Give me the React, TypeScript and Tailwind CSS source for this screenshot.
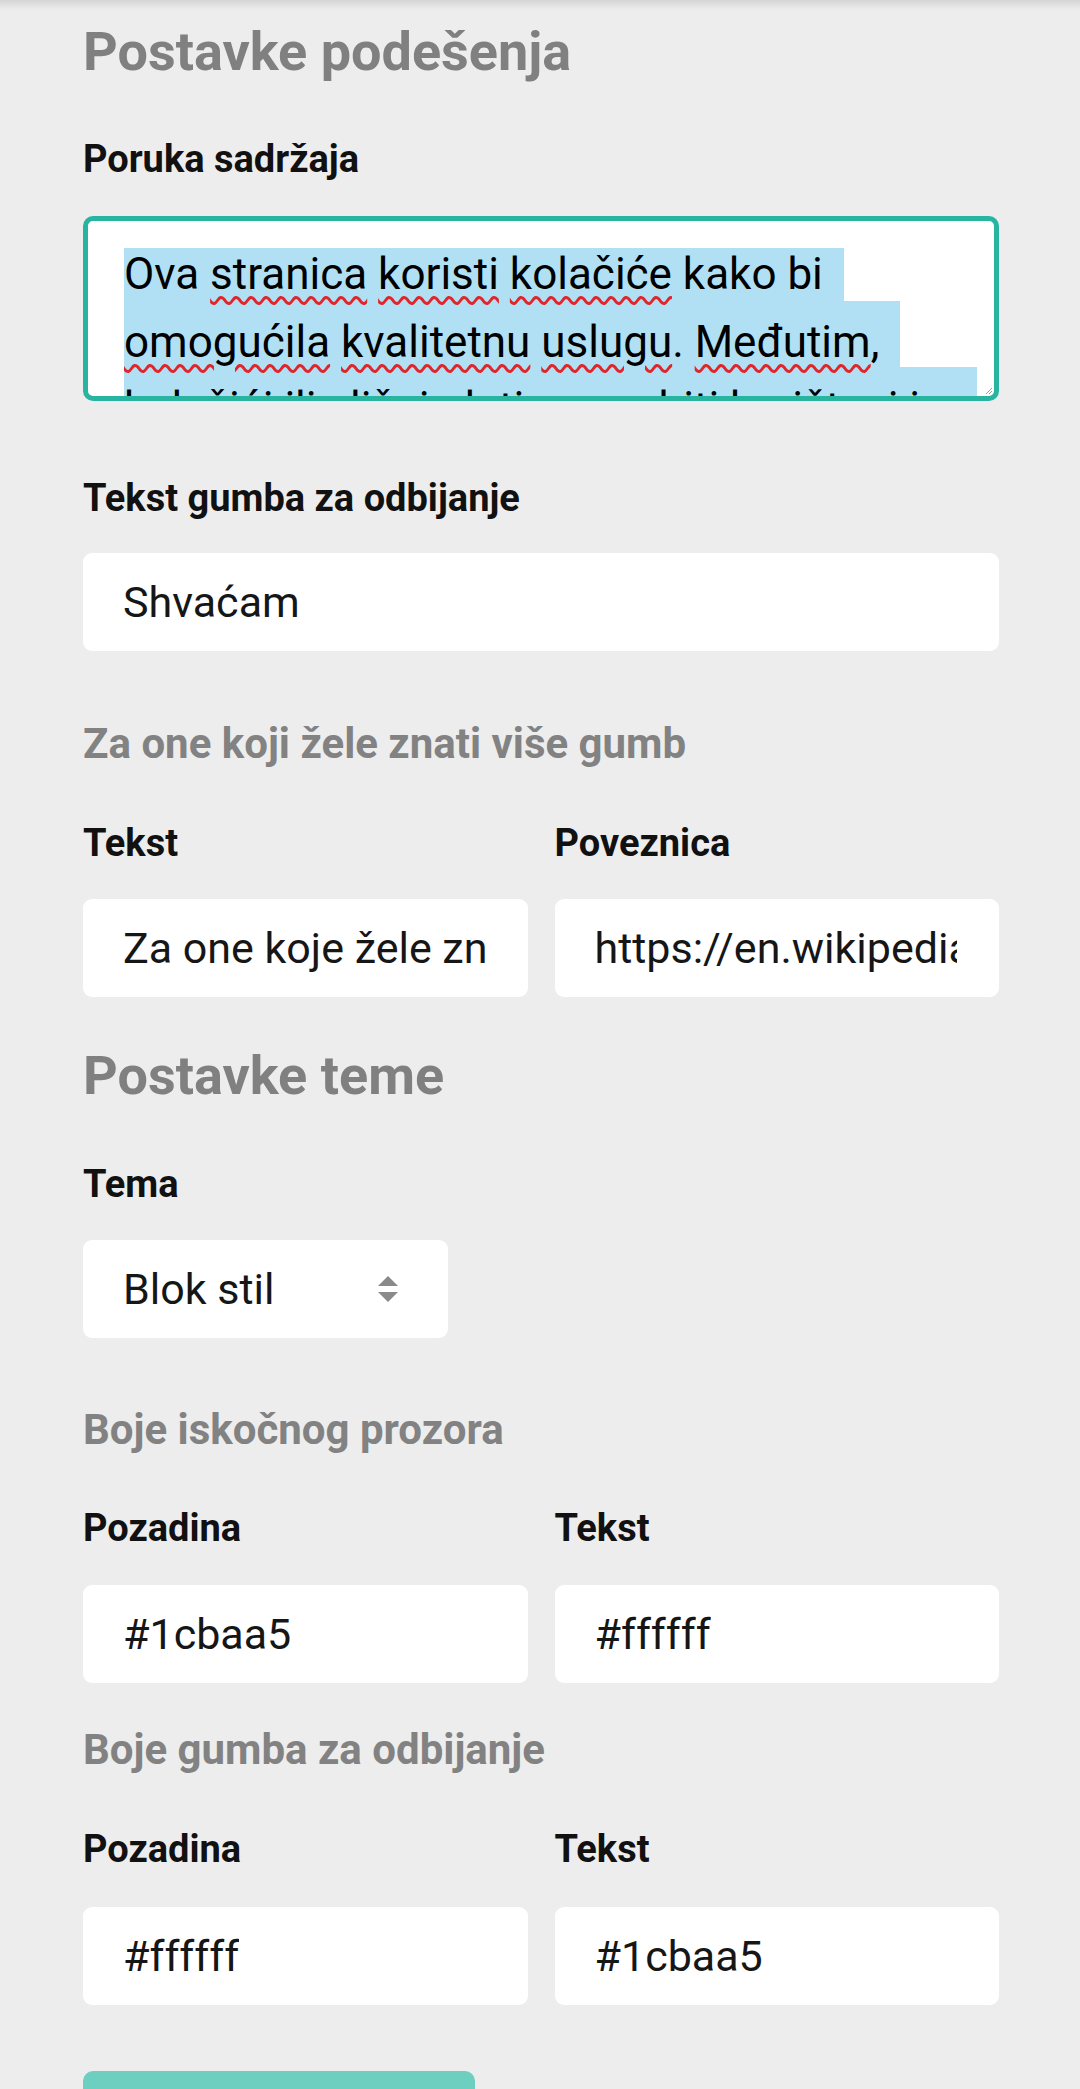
import React from "react";

function Label({ children }: { children: React.ReactNode }) {
  return <div className="h-[48px] text-[38px] leading-[48px] font-bold text-[#111111]">{children}</div>;
}

function Field({ value }: { value: string }) {
  return (
    <div className="flex h-[98px] items-center rounded-[9px] bg-white pr-[42px] pl-[40px] text-[43px] text-[#161616]">
      <div className="overflow-hidden whitespace-nowrap leading-[52px]">{value}</div>
    </div>
  );
}

function Typo({ children }: { children: React.ReactNode }) {
  return (
    <span className="underline decoration-wavy decoration-[#e0262b] decoration-[2.5px] underline-offset-[7px]">
      {children}
    </span>
  );
}

export default function App() {
  return (
    <div className="h-[2089px] overflow-hidden bg-[#ededed] font-['Roboto','Noto_Sans',sans-serif]">
      {/* app bar shadow */}
      <div className="h-[10px] bg-gradient-to-b from-[#d4d4d4] to-[#ededed]" />

      <div className="ml-[83px] flex w-[916px] flex-col">
        {/* Postavke podešenja */}
        <h1 className="mt-[10px] h-[64px] text-[54px] leading-[64px] font-bold text-[#808080]">Postavke podešenja</h1>

        <div className="mt-[51px]">
          <Label>Poruka sadržaja</Label>
        </div>

        {/* focused textarea with selected text */}
        <div className="relative mt-[33px] h-[185px] overflow-hidden rounded-[10px] border-[5px] border-[#27b5a1] bg-white">
          <div className="pl-[36px] pt-[27px] text-[44px] text-black">
            <div className="h-[53px] w-[720px] whitespace-nowrap bg-[#b1e0f5] leading-[53px]">
              Ova <Typo>stranica</Typo> <Typo>koristi</Typo> <Typo>kolačiće</Typo> kako bi
            </div>
            <div className="h-[66px] w-[776px] whitespace-nowrap bg-[#b1e0f5] pt-[15px] leading-[53px]">
              <Typo>omogućila</Typo> <Typo>kvalitetnu</Typo> <Typo>uslugu</Typo>. <Typo>Međutim</Typo>,
            </div>
            <div className="h-[66px] w-[853px] overflow-hidden whitespace-nowrap bg-[#b1e0f5] pt-[15px] leading-[53px]">
              kolačići ili slični alati mogu biti korišteni i za
            </div>
          </div>
          <svg className="absolute right-[1px] bottom-[1px]" width="9" height="9" viewBox="0 0 9 9">
            <path d="M8 2 L2 8 M8 5 L5 8" stroke="#9a9a9a" strokeWidth="1" />
          </svg>
        </div>

        <div className="mt-[73px]">
          <Label>Tekst gumba za odbijanje</Label>
        </div>
        <div className="mt-[31px]">
          <Field value="Shvaćam" />
        </div>

        {/* learn more button */}
        <h3 className="mt-[65px] h-[56px] text-[42px] leading-[56px] font-bold text-[#828282]">Za one koji žele znati više gumb</h3>
        <div className="mt-[47px] grid grid-cols-2 gap-x-[27px]">
          <Label>Tekst</Label>
          <Label>Poveznica</Label>
        </div>
        <div className="mt-[32px] grid grid-cols-2 gap-x-[27px]">
          <Field value="Za one koje žele znati više" />
          <Field value="https://en.wikipedia.org/wiki/HTTP_cookie" />
        </div>

        {/* Postavke teme */}
        <h1 className="mt-[47px] h-[64px] text-[54px] leading-[64px] font-bold text-[#808080]">Postavke teme</h1>
        <div className="mt-[52px]">
          <Label>Tema</Label>
        </div>
        <div className="mt-[32px] flex h-[98px] w-[365px] items-center justify-between rounded-[9px] bg-white pr-[50px] pl-[40px] text-[43px] text-[#161616]">
          <span className="leading-[52px]">Blok stil</span>
          <svg width="20" height="28" viewBox="0 0 20 28">
            <path d="M10 1 L20 11 H0 Z" fill="#8a8a8a" />
            <path d="M0 17 H20 L10 27 Z" fill="#8a8a8a" />
          </svg>
        </div>

        <h3 className="mt-[64px] h-[56px] text-[42px] leading-[56px] font-bold text-[#828282]">Boje iskočnog prozora</h3>
        <div className="mt-[46px] grid grid-cols-2 gap-x-[27px]">
          <Label>Pozadina</Label>
          <Label>Tekst</Label>
        </div>
        <div className="mt-[33px] grid grid-cols-2 gap-x-[27px]">
          <Field value="#1cbaa5" />
          <Field value="#ffffff" />
        </div>

        <h3 className="mt-[39px] h-[56px] text-[42px] leading-[56px] font-bold text-[#828282]">Boje gumba za odbijanje</h3>
        <div className="mt-[47px] grid grid-cols-2 gap-x-[27px]">
          <Label>Pozadina</Label>
          <Label>Tekst</Label>
        </div>
        <div className="mt-[34px] grid grid-cols-2 gap-x-[27px]">
          <Field value="#ffffff" />
          <Field value="#1cbaa5" />
        </div>

        {/* save button, cut off by the screen edge */}
        <div className="mt-[66px] h-[80px] w-[392px] rounded-t-[10px] bg-[#6dcfc0]" />
      </div>
    </div>
  );
}
